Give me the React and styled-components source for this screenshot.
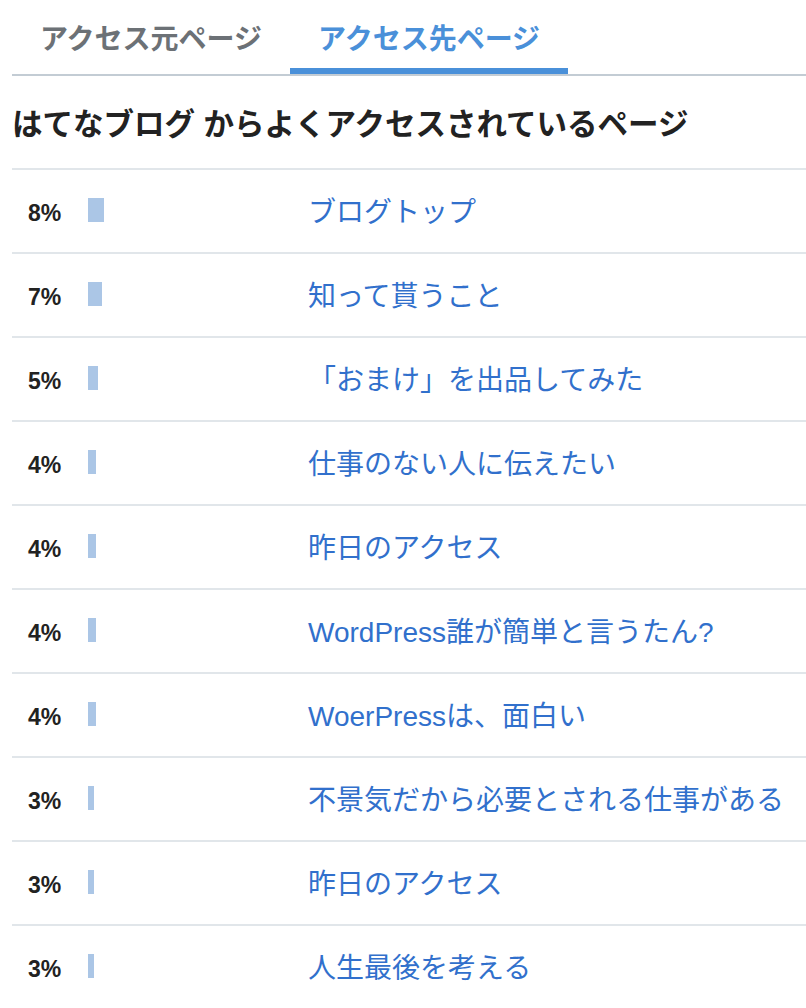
import React from 'react';
import styled, { createGlobalStyle } from 'styled-components';

const GlobalStyle = createGlobalStyle`
  body {
    margin: 0;
    background: #fff;
    font-family: 'Liberation Sans', 'Noto Sans CJK JP', sans-serif;
  }
`;

const Wrap = styled.div`
  padding-left: 12px;
  width: 806px;
  box-sizing: border-box;
  overflow: hidden;
`;

const TabBar = styled.div`
  display: flex;
  border-bottom: 2px solid #c3ccd4;
`;

const Tab = styled.div`
  padding: 20px 28px 8px;
  font-size: 28px;
  line-height: 40px;
  font-weight: 700;
  color: ${(p) => (p.active ? '#4a90d9' : '#6c7176')};
  border-bottom: 6px solid ${(p) => (p.active ? '#4a90d9' : 'transparent')};
`;

const Heading = styled.h2`
  margin: 0;
  padding: 28px 0 24px;
  font-size: 30.5px;
  line-height: 40px;
  font-weight: 700;
  color: #222;
`;

const Row = styled.div`
  display: grid;
  grid-template-columns: 60px 220px 1fr;
  align-items: center;
  height: 84px;
  padding-left: 16px;
  border-top: 2px solid #e1e6ea;
  box-sizing: border-box;
`;

const Pct = styled.span`
  font-size: 23px;
  font-weight: 700;
  color: #222;
  padding-top: 4px;
`;

const Bar = styled.span`
  display: block;
  height: 24px;
  background: #abc6e6;
  margin-top: -2px;
`;

const Title = styled.a`
  font-size: 28px;
  color: #3170cc;
  text-decoration: none;
  white-space: nowrap;
  margin-top: -2px;
`;

const pages = [
  { pct: 8, title: 'ブログトップ' },
  { pct: 7, title: '知って貰うこと' },
  { pct: 5, title: '「おまけ」を出品してみた' },
  { pct: 4, title: '仕事のない人に伝えたい' },
  { pct: 4, title: '昨日のアクセス' },
  { pct: 4, title: 'WordPress誰が簡単と言うたん?' },
  { pct: 4, title: 'WoerPressは、面白い' },
  { pct: 3, title: '不景気だから必要とされる仕事がある' },
  { pct: 3, title: '昨日のアクセス' },
  { pct: 3, title: '人生最後を考える' },
];

export default function App() {
  return (
    <Wrap>
      <GlobalStyle />
      <TabBar>
        <Tab>アクセス元ページ</Tab>
        <Tab active>アクセス先ページ</Tab>
      </TabBar>
      <Heading>はてなブログ からよくアクセスされているページ</Heading>
      {pages.map((res, index) => (
        <Row key={index}>
          <Pct>{`${res.pct}%`}</Pct>
          <div>
            <Bar style={{ width: `${res.pct * 2}px` }} />
          </div>
          <Title href="#">{res.title}</Title>
        </Row>
      ))}
    </Wrap>
  );
}
